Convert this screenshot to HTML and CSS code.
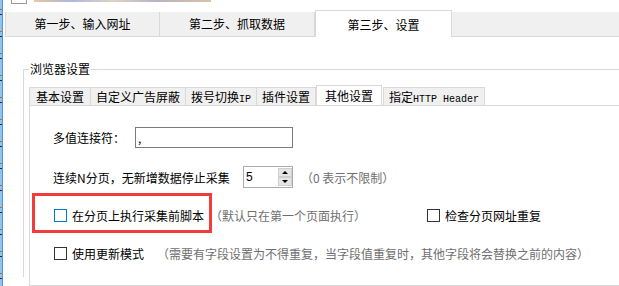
FILE: index.html
```html
<!DOCTYPE html>
<html lang="zh-CN">
<head>
    <meta charset="UTF-8">
    <meta name="viewport" content="width=device-width, initial-scale=1.0">
    <title>采集设置</title>
    <link rel="stylesheet" href="styles.css">
</head>
<body>
    <div class="screen">
        <div class="edge"></div>

        <div class="window">
            <!-- title bar, mostly cut off at the top -->
            <div class="titlebar">
                <span class="app-icon"></span>
                <span class="title-blur"></span>
            </div>

            <!-- step tabs -->
            <div class="steps">
                <div class="step">第一步、输入网址</div>
                <div class="step">第二步、抓取数据</div>
                <div class="step active">第三步、设置</div>
            </div>

            <fieldset class="group">
                <legend>浏览器设置</legend>

                <div class="tabs">
                    <div class="tab">基本设置</div>
                    <div class="tab">自定义广告屏蔽</div>
                    <div class="tab">拨号切换<span class="latin">IP</span></div>
                    <div class="tab">插件设置</div>
                    <div class="tab active">其他设置</div>
                    <div class="tab">指定<span class="latin">HTTP Header</span></div>
                </div>

                <div class="panel">
                    <div class="row row-join">
                        <label class="label-join" for="joiner">多值连接符：</label>
                        <input class="text-input" id="joiner" type="text" value=",">
                    </div>

                    <div class="row row-stop">
                        <label class="label-stop" for="stopPages">连续N分页，无新增数据停止采集</label>
                        <div class="spinner">
                            <input class="spin-value" id="stopPages" type="text" value="5">
                            <div class="spin-buttons">
                                <span class="spin-btn up"></span>
                                <span class="spin-btn down"></span>
                            </div>
                        </div>
                        <span class="note note-stop">（0 表示不限制）</span>
                    </div>

                    <div class="row row-script">
                        <div class="cell cell-script">
                            <span class="box box-focus"></span>
                            <span class="check-label">在分页上执行采集前脚本</span>
                            <span class="note note-script">（默认只在第一个页面执行）</span>
                        </div>
                        <div class="cell">
                            <span class="box"></span>
                            <span class="check-label">检查分页网址重复</span>
                        </div>
                    </div>

                    <div class="row row-update">
                        <span class="box"></span>
                        <span class="check-label">使用更新模式</span>
                        <span class="note note-update">（需要有字段设置为不得重复，当字段值重复时，其他字段将会替换之前的内容）</span>
                    </div>

                    <!-- red annotation box drawn over the screenshot -->
                    <div class="highlight"></div>
                </div>
            </fieldset>
        </div>
    </div>
</body>
</html>
```

FILE: styles.css
```css
/* Základ */
html, body {
    margin: 0;
    padding: 0;
}

body {
    width: 619px;
    height: 286px;
    overflow: hidden;
    background: #fff;
    font-family: "Noto Sans CJK SC", "Noto Sans", sans-serif;
    font-size: 12px;
    color: #000;
}

.screen {
    display: flex;
    height: 286px;
}

/* okraj vedlejšího okna vlevo */
.edge {
    width: 3px;
    flex-shrink: 0;
    background:
        repeating-linear-gradient(to bottom, transparent 0 9px, #c36a1c 9px 10px, transparent 10px 14px, #1d2b40 14px 15px, transparent 15px 22px),
        #8ec4ef;
    border-right: 1px solid #4a98e0;
    box-sizing: border-box;
}

.window {
    flex: 1;
    min-width: 0;
    overflow: hidden;
}

/* Titulek */
.titlebar {
    height: 12px;
    display: flex;
    align-items: flex-start;
}

.app-icon {
    width: 14px;
    height: 3px;
    margin-left: 8px;
    border: 1px solid #9a9a9a;
    border-top: none;
    background: #fff;
}

.title-blur {
    width: 177px;
    height: 2px;
    margin-left: 7px;
    background: linear-gradient(to right, #d9a25b, #7a88c9 20%, #c8b49a 45%, #8b7f9e 70%, #c39a6a);
    opacity: 0.6;
}

/* Kroky */
.steps {
    display: flex;
    align-items: flex-end;
    height: 24px;
    margin-left: 2px;
    background: #f0f0f0;
    border-left: 1px solid #d9d9d9;
    border-bottom: 1px solid #d9d9d9;
}

.step {
    width: 155px;
    height: 24px;
    line-height: 24px;
    text-align: center;
    box-sizing: border-box;
    border-right: 1px solid #d9d9d9;
}

.step:first-child {
    width: 154px;
}

.step.active {
    width: 137px;
    height: 27px;
    line-height: 28px;
    margin-bottom: -1px;
    background: #fff;
    border: 1px solid #d9d9d9;
    border-bottom: none;
    position: relative;
}

/* Skupina */
.group {
    width: 700px;
    margin: 24px 0 0 20px;
    padding: 8px 0 0 5px;
    border: 1px solid #d9d9d9;
    border-right: none;
    border-bottom: none;
    min-width: 0;
    height: 216px;
    box-sizing: border-box;
}

.group legend {
    padding: 0 1px;
    line-height: 16px;
    color: #000;
}

.tabs {
    display: flex;
    align-items: flex-end;
    height: 20px;
}

.tab {
    height: 18px;
    line-height: 18px;
    padding: 0 5px;
    box-sizing: border-box;
    background: #f0f0f0;
    border: 1px solid #d9d9d9;
    border-bottom: none;
    margin-right: -1px;
    white-space: nowrap;
}

.tab:first-child {
    padding: 0 6px;
}

.tab .latin {
    font-family: "Liberation Mono", monospace;
    font-size: 10px;
    letter-spacing: 0;
}

.tab.active {
    height: 21px;
    line-height: 20px;
    margin: 0 1px -1px 1px;
    padding: 0 8px;
    background: #fff;
    position: relative;
}

.panel {
    position: relative;
    height: 181px;
    box-sizing: border-box;
    padding: 21px 0 0 23px;
    border: 1px solid #d9d9d9;
    border-right: none;
}

/* Řádky */
.row {
    display: flex;
    align-items: center;
    white-space: nowrap;
}

.row-join {
    height: 21px;
}

.label-join {
    width: 82px;
}

.text-input {
    width: 158px;
    height: 21px;
    box-sizing: border-box;
    border: 1px solid #7a7a7a;
    padding: 0 2px;
    font: inherit;
    line-height: 19px;
    outline: none;
}

.row-stop {
    height: 22px;
    margin-top: 18px;
}

.label-stop {
    width: 190px;
}

.spinner {
    width: 50px;
    height: 22px;
    box-sizing: border-box;
    border: 1px solid #acacac;
    display: flex;
    align-items: center;
}

.spin-value {
    width: 30px;
    border: none;
    padding: 0 0 0 2px;
    font: 12px "Liberation Sans", sans-serif;
    outline: none;
}

.spin-buttons {
    display: flex;
    flex-direction: column;
    margin-left: 2px;
}

.spin-btn {
    position: relative;
    width: 14px;
    height: 9px;
    box-sizing: border-box;
    background: #e5e5e5;
    border: 1px solid #cfcfcf;
}

.spin-btn::after {
    content: "";
    position: absolute;
    left: 3px;
    top: 2px;
    border-left: 3px solid transparent;
    border-right: 3px solid transparent;
}

.spin-btn.up::after {
    border-bottom: 3px solid #000;
}

.spin-btn.down::after {
    border-top: 3px solid #000;
}

.note {
    color: #6f6f6f;
}

.note-stop {
    margin-left: 8px;
}

.row-script {
    height: 22px;
    margin-top: 16px;
}

.cell {
    display: flex;
    align-items: center;
}

.cell-script {
    width: 373px;
}

.box {
    width: 13px;
    height: 13px;
    box-sizing: border-box;
    border: 1px solid #333;
    background: #fff;
    margin-left: 1px;
    margin-right: 5px;
    flex-shrink: 0;
}

.box-focus {
    border-color: #0078d7;
}

.note-script {
    margin-left: 6px;
}

.row-update {
    height: 22px;
    margin-top: 16px;
}

.note-update {
    margin-left: 13px;
}

/* Červené zvýraznění */
.highlight {
    position: absolute;
    left: 2px;
    top: 87px;
    width: 180px;
    height: 40px;
    box-sizing: border-box;
    border: 3px solid #f23c3c;
}
```
